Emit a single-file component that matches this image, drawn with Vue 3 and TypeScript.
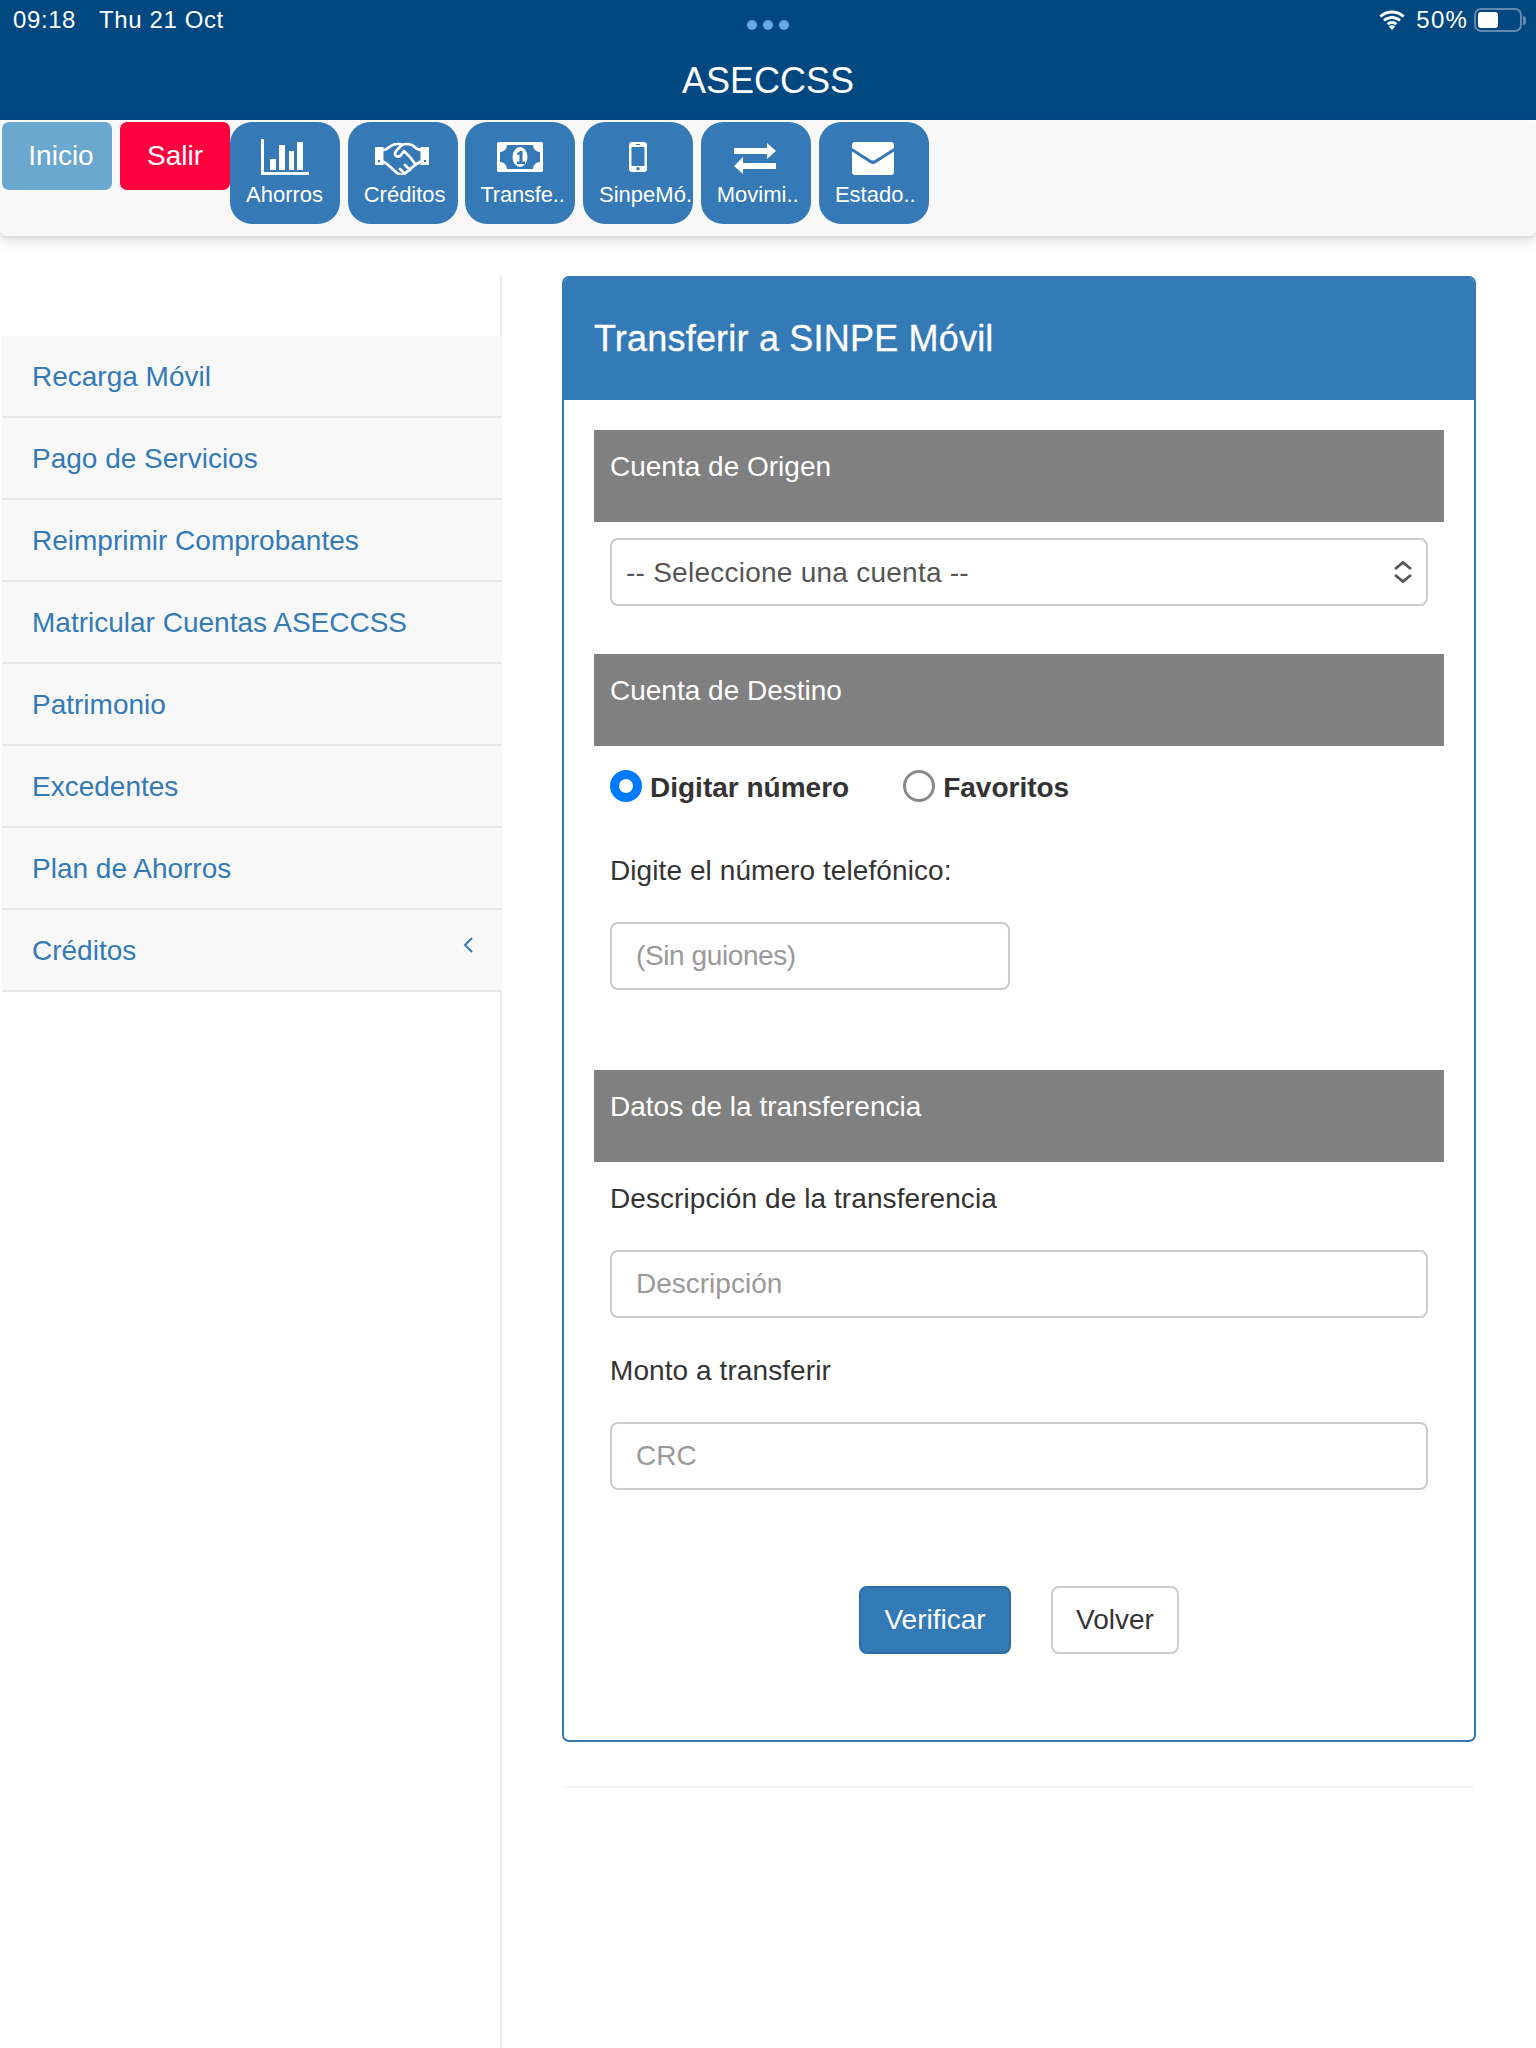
<script setup lang="ts">
const menu: string[] = ['Recarga Móvil', 'Pago de Servicios', 'Reimprimir Comprobantes', 'Matricular Cuentas ASECCSS', 'Patrimonio', 'Excedentes', 'Plan de Ahorros']
</script>

<template>
  <div class="page">
    <header class="top">
      <div class="status">
        <div class="status-left"><span>09:18</span><span>Thu 21 Oct</span></div>
        <div class="dots"><i></i><i></i><i></i></div>
        <div class="status-right">
          <svg class="wifi" width="28" height="20" viewBox="0 0 28 20"><path d="M14 3.500c4.200 0 7.900 1.600 10.700 4.200l1.900-2.100C23.300 2.500 18.900.6 14 .6S4.700 2.500 1.400 5.600l1.900 2.100C6.100 5.100 9.800 3.500 14 3.500z" fill="#fff"/><path d="M14 8.900c2.700 0 5.100 1 7 2.700l2-2.100c-2.400-2.200-5.500-3.500-9-3.500s-6.600 1.300-9 3.500l2 2.100c1.900-1.700 4.300-2.700 7-2.700z" fill="#fff"/><path d="M14 14c1.300 0 2.400.5 3.300 1.300l2-2.100c-1.400-1.300-3.300-2.100-5.300-2.100s-3.900.8-5.300 2.100l2 2.100c.9-.8 2-1.300 3.300-1.300zM14 20l3.200-3.400c-.8-.8-2-1.300-3.200-1.300s-2.400.5-3.200 1.300z" fill="#fff"/></svg>
          <span>50%</span>
          <span class="battery"><b></b></span>
          <span class="nub"></span>
        </div>
      </div>
      <h1 class="brand">ASECCSS</h1>
    </header>

    <nav class="nav">
      <a class="flat inicio">Inicio</a>
      <a class="flat salir">Salir</a>
      <a class="tile">
        <svg width="48" height="36" viewBox="0 0 48 36" fill="#fff"><path d="M0 0h3v33h45v3H0z"/><rect x="9" y="20" width="6" height="11"/><rect x="18" y="6" width="6" height="25"/><rect x="28" y="12" width="5" height="19"/><rect x="36" y="3" width="6" height="28"/></svg>
        <span>Ahorros</span>
      </a>
      <a class="tile">
        <svg width="54" height="36" viewBox="0 -3 54 36"><path d="M0 5h8.500v18H0zM45.500 5H54v18h-8.500z" fill="#fff"/><circle cx="4" cy="19" r="1.200" fill="#337ab7"/><circle cx="50" cy="19" r="1.200" fill="#337ab7"/><path d="M8 8c4 0 6-4 11-5.500 3-.7 6-.7 8 .5 3-1.500 7-1 10 0 3 2 5 5 9 5M8.500 20l3.500 2 10 9c3 2.300 6 2.300 8.500 0l9.500-8 5-3M27 3c-3 3-7 6-7 8.500 0 3 4 4.500 6 1.500l3-4c3.500 3 8 8 11.500 13.500M35 28l-5-5M29 31l-4-4" fill="none" stroke="#fff" stroke-width="2.700" stroke-linejoin="round" stroke-linecap="round"/></svg>
        <span>Créditos</span>
      </a>
      <a class="tile">
        <svg width="46" height="36" viewBox="0 -3 46 36"><path fill-rule="evenodd" d="M1.500 0h43c.8 0 1.500.7 1.500 1.500v27c0 .8-.7 1.500-1.500 1.500h-43C.7 30 0 29.300 0 28.500v-27C0 .7.700 0 1.500 0zM10 3A7 7 0 0 1 3 10v10a7 7 0 0 1 7 7h26a7 7 0 0 1 7-7V10a7 7 0 0 1-7-7z" fill="#fff"/><ellipse cx="23" cy="15" rx="7.500" ry="10" fill="#fff"/><path d="M19.800 11.500l3.200-2.500h2.500v10.500H28V22h-8v-2.500h2.500v-7l-1.500 1z" fill="#337ab7"/></svg>
        <span class="tight">Transfe..</span>
      </a>
      <a class="tile">
        <svg width="18" height="36" viewBox="0 -3 18 36"><path fill-rule="evenodd" d="M3 0h12c1.700 0 3 1.300 3 3v24c0 1.700-1.300 3-3 3H3c-1.700 0-3-1.300-3-3V3c0-1.700 1.300-3 3-3zM2.500 5v19h13V5zM7 2v1h4V2zM9 25a1.700 1.700 0 1 0 0 3.400A1.700 1.700 0 0 0 9 25z" fill="#fff"/></svg>
        <span>SinpeMó..</span>
      </a>
      <a class="tile">
        <svg width="42" height="36" viewBox="0 -4 42 36" fill="#fff"><path d="M0 5h33V0l9 8-9 8v-5H0z"/><path d="M42 26H9v5L0 23l9-9v6h33z"/></svg>
        <span>Movimi..</span>
      </a>
      <a class="tile last">
        <svg width="42" height="36" viewBox="0 -3 42 36"><path d="M3 0h36c1.700 0 3 1.300 3 3v3L23 18c-1.300.8-2.700.8-4 0L0 6V3c0-1.700 1.300-3 3-3z" fill="#fff"/><path d="M0 9.500L18 21c2 1.200 4 1.200 6 0L42 9.500V30c0 1.700-1.300 3-3 3H3c-1.700 0-3-1.300-3-3z" fill="#fff"/></svg>
        <span>Estado..</span>
      </a>
    </nav>

    <main class="main">
      <aside class="side">
        <ul class="list">
          <li v-for="m in menu" :key="m">{{ m }}</li>
          <li class="more">Créditos
            <svg class="chev" width="10" height="16" viewBox="0 0 10 16"><path d="M9 1L2 8l7 7" fill="none" stroke="#337ab7" stroke-width="2"/></svg>
          </li>
        </ul>
      </aside>

      <section class="content">
        <div class="panel">
          <h2 class="heading">Transferir a SINPE Móvil</h2>
          <div class="body">
            <div class="bar">Cuenta de Origen</div>
            <div class="select-wrap">
              <select class="field select"><option>-- Seleccione una cuenta --</option></select>
              <svg class="updown" width="20" height="22" viewBox="0 0 20 22"><path d="M2 8l8-6.500L18 8M2 14l8 6.500L18 14" fill="none" stroke="#555" stroke-width="2.800"/></svg>
            </div>

            <div class="bar second">Cuenta de Destino</div>
            <div class="radios">
              <label class="radio"><input type="radio" name="dest" checked /><span>Digitar número</span></label>
              <label class="radio"><input type="radio" name="dest" /><span>Favoritos</span></label>
            </div>
            <p class="label phone-label">Digite el número telefónico:</p>
            <input class="field short" placeholder="(Sin guiones)" />

            <div class="bar third">Datos de la transferencia</div>
            <p class="label desc-label">Descripción de la transferencia</p>
            <input class="field wide" placeholder="Descripción" />
            <p class="label amount-label">Monto a transferir</p>
            <input class="field wide" placeholder="CRC" />

            <div class="actions">
              <button class="btn primary">Verificar</button>
              <button class="btn back">Volver</button>
            </div>
          </div>
        </div>
        <hr class="rule" />
      </section>
    </main>
  </div>
</template>

<style>
html, body { margin: 0; background: #fff; }
</style>

<style scoped>
.page { width: 1536px; height: 2048px; overflow: hidden; font-family: "Liberation Sans", Arial, sans-serif; color: #333; background: #fff; }
.top { height: 120px; background: #014780; color: #fff; }
.status { display: grid; grid-template-columns: 1fr auto 1fr; align-items: center; height: 40px; padding: 0 10px; font-size: 24px; }
.status-left { display: flex; gap: 23px; letter-spacing: .6px; margin-left: 3px; }
.dots { display: flex; gap: 6px; margin-top: 10px; }
.dots i { width: 10px; height: 10px; border-radius: 50%; background: #64a9e6; }
.status-right { display: flex; justify-content: flex-end; align-items: center; letter-spacing: 1.200px; }
.wifi { margin-right: 10px; }
.battery { width: 48px; height: 24px; box-sizing: border-box; border: 2px solid #6488ad; border-radius: 7px; margin-left: 6px; padding: 2px; display: flex; }
.battery b { width: 20px; background: #fff; border-radius: 3px; }
.nub { width: 3px; height: 9px; background: #6488ad; border-radius: 0 3px 3px 0; margin-left: 1px; }
.brand { margin: 14px 0 0; font-size: 36px; font-weight: 400; line-height: 54px; text-align: center; }

.nav { display: flex; align-items: flex-start; height: 114px; margin: 2px 0 0; padding: 0 0 0 2px; background: #f8f8f8; border-radius: 0 0 6px 6px; box-shadow: 0 2px 2px #ddd, 0 5px 14px rgba(0,0,0,.14); box-sizing: border-box; position: relative; }
.flat { width: 110px; height: 68px; border-radius: 7px; color: #fff; font-size: 28px; line-height: 68px; text-align: center; margin-right: 8px; box-sizing: border-box; }
.inicio { background: #6ba8d0; padding-left: 8px; }
.salir { background: #ff003f; margin-right: 0; }
.tile { width: 110px; height: 102px; border-radius: 22px; background: #3579b6; color: #fff; margin-right: 7.700px; font-size: 22px; display: flex; flex-direction: column; align-items: center; padding: 17px 1px 0 0; box-sizing: border-box; white-space: nowrap; position: relative; flex: none; }
.last { margin-left: .5px; }
.tile svg { flex: none; }
.tile span { position: absolute; top: 57px; left: 16px; line-height: 32px; }
.tile .tight { left: 15px; letter-spacing: -.2px; }

.main { display: flex; height: 1812px; }
.side { flex: none; width: 498px; margin: 40px 0 0 2px; border-right: 2px solid #e8e8e8; padding-top: 60px; }
.list { list-style: none; margin: 0 -2px 0 0; padding: 0; }
.list li { height: 82px; box-sizing: border-box; padding: 0 30px; line-height: 82px; background: #f8f8f8; border-bottom: 2px solid #e7e7e7; color: #337ab7; font-size: 28px; position: relative; }
.chev { position: absolute; right: 29px; top: 27px; }

.content { width: 914px; margin: 40px 0 0 60px; flex: none; }
.panel { border: 2px solid #337ab7; border-radius: 7px; height: 1466px; box-sizing: border-box; overflow: hidden; }
.heading { margin: 0; height: 122px; background: #337ab7; color: #fff; font-size: 36px; font-weight: 400; line-height: 122px; padding: 0 30px; letter-spacing: .2px; -webkit-text-stroke: .3px #fff; }
.body { padding: 30px 30px 0; }
.bar { height: 92px; background: #808080; color: #fff; font-size: 28px; line-height: 74px; padding: 0 16px; box-sizing: border-box; }
.second { margin-top: 48px; }
.third { margin-top: 80px; }
.field { display: block; height: 68px; box-sizing: border-box; border: 2px solid #ccc; border-radius: 8px; background: #fff; font: 28px "Liberation Sans", Arial, sans-serif; color: #555; padding: 0 24px; outline: none; }
.field::placeholder { color: #999; opacity: 1; }
.select-wrap { position: relative; margin: 16px 16px 0; }
.select { width: 100%; appearance: none; padding: 0 14px; letter-spacing: .25px; }
.updown { position: absolute; right: 15px; top: 23px; }
.radios { display: flex; gap: 54px; margin: 24px 16px 0; height: 32px; }
.radio { display: flex; align-items: center; gap: 8px; font-size: 28px; font-weight: 700; }
.radio input { appearance: none; width: 32px; height: 32px; margin: 0; border-radius: 50%; border: 3px solid #8a8a8a; background: #fff; box-sizing: border-box; }
.radio input:checked { border: 9px solid #007aff; }
.radio span { position: relative; top: 2px; }
.label { margin: 0 16px; font-size: 28px; line-height: 40px; letter-spacing: .08px; }
.phone-label { margin-top: 49px; }
.short { width: 400px; margin: 31px 16px 0; }
.short::placeholder { letter-spacing: -.4px; }
.wide { width: 818px; margin: 0 16px; }
.desc-label { margin-top: 17px; }
.desc-label + .field { margin-top: 31px; }
.amount-label { margin-top: 33px; }
.amount-label + .field { margin-top: 31px; }
.actions { display: flex; justify-content: center; gap: 40px; margin-top: 96px; }
.btn { height: 68px; width: 128px; padding: 0; box-sizing: border-box; border: 2px solid #ccc; border-radius: 8px; background: #fff; color: #333; font: 28px "Liberation Sans", Arial, sans-serif; }
.primary { width: 152px; background: #337ab7; border-color: #2e6da4; color: #fff; }
.rule { border: 0; border-top: 2px solid #f2f2f2; margin: 44px 2px 0; }
</style>
